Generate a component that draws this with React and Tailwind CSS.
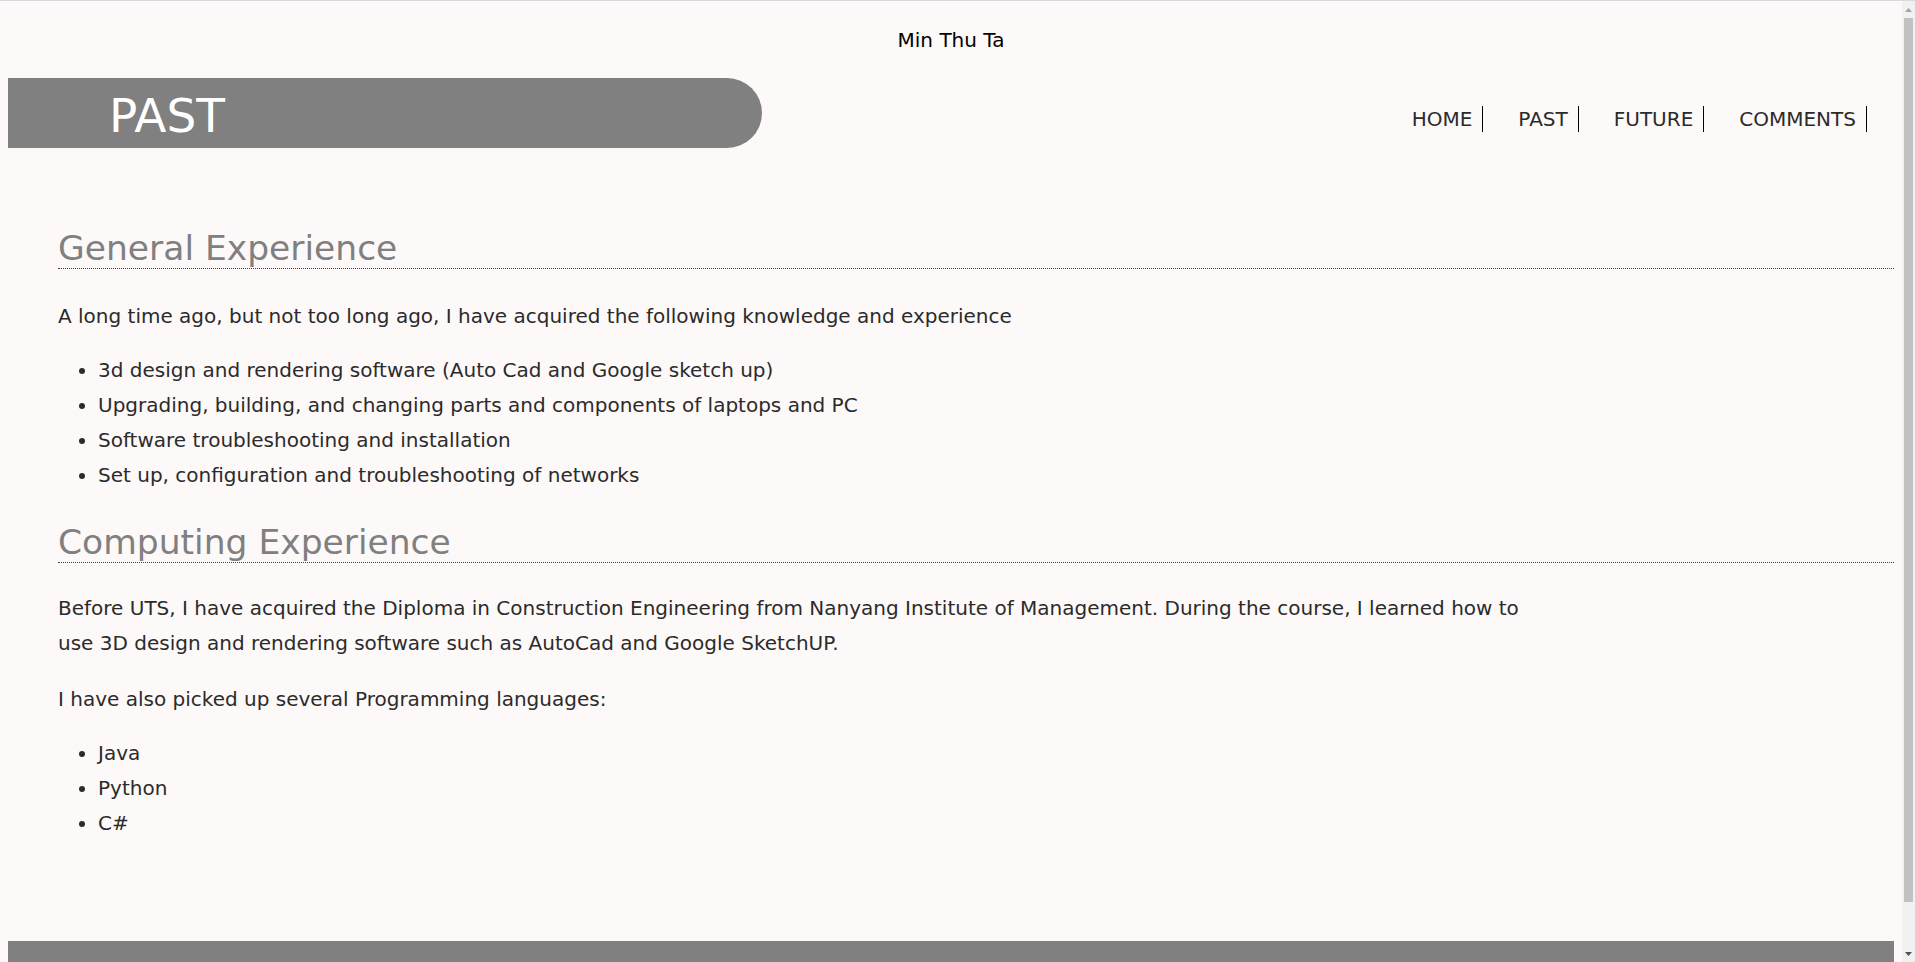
export default function App() {
  const font = { fontFamily: '"DejaVu Sans", Verdana, sans-serif' };
  return (
    <div className="flex h-screen overflow-hidden border-t border-[#d8d8de] bg-[#fdf9f8]" style={font}>
      <div className="min-w-0 flex-1 px-2 pb-2 text-[#2b2b2b]">
        <div className="pt-[27px] text-center text-[20px] leading-[24px] text-black">Min Thu Ta</div>

        <div className="mt-[26px] flex items-center justify-between">
          <div className="flex h-[70px] w-[40%] items-center rounded-r-[35px] bg-[#808080] pl-[101px]">
            <span className="mt-[4px] text-[47px] leading-none text-white">PAST</span>
          </div>
          <nav className="mr-[27px] mt-[11px] flex items-center text-[20px] text-[#2b2b2b]">
            {['HOME', 'PAST', 'FUTURE', 'COMMENTS'].map((n, i) => (
              <span
                key={n}
                className={`border-r border-black pr-[10px] leading-[26px] ${i > 0 ? 'ml-[35px]' : ''}`}
              >
                {n}
              </span>
            ))}
          </nav>
        </div>

        <main className="pl-[50px] pt-[80px] text-[20px] leading-[35px]">
          <h2 className="border-b border-dotted border-[#444] text-[34.5px] leading-[40px] text-[#808080]">
            General Experience
          </h2>
          <p className="mt-[30px]">
            A long time ago, but not too long ago, I have acquired the following knowledge and experience
          </p>
          <ul className="mt-[19px] list-disc pl-[40px]">
            <li>3d design and rendering software (Auto Cad and Google sketch up)</li>
            <li>Upgrading, building, and changing parts and components of laptops and PC</li>
            <li>Software troubleshooting and installation</li>
            <li>Set up, configuration and troubleshooting of networks</li>
          </ul>

          <h2 className="mt-[29px] border-b border-dotted border-[#444] text-[34.5px] leading-[40px] text-[#808080]">
            Computing Experience
          </h2>
          <p className="mt-[28px] max-w-[1500px]">
            Before UTS, I have acquired the Diploma in Construction Engineering from Nanyang Institute of Management. During the course, I learned how to use 3D design and rendering software such as AutoCad and Google SketchUP.
          </p>
          <p className="mt-[21px]">I have also picked up several Programming languages:</p>
          <ul className="mt-[19px] list-disc pl-[40px]">
            <li>Java</li>
            <li>Python</li>
            <li>C#</li>
          </ul>
        </main>

        <footer className="mt-[100px] h-[60px] bg-[#808080]" />
      </div>

      {/* browser scrollbar */}
      <div className="flex w-[13px] shrink-0 flex-col items-center bg-[#f1f1f1]">
        <div className="flex h-[17px] items-center justify-center">
          <svg width="7" height="4" viewBox="0 0 7 4"><path d="M3.5 0L7 4H0z" fill="#a3a3a3" /></svg>
        </div>
        <div className="h-[884px] w-[9px] bg-[#c1c1c1]" />
        <div className="flex-1" />
        <div className="flex h-[17px] items-center justify-center">
          <svg width="7" height="4" viewBox="0 0 7 4"><path d="M0 0H7L3.5 4z" fill="#505050" /></svg>
        </div>
      </div>
    </div>
  );
}
